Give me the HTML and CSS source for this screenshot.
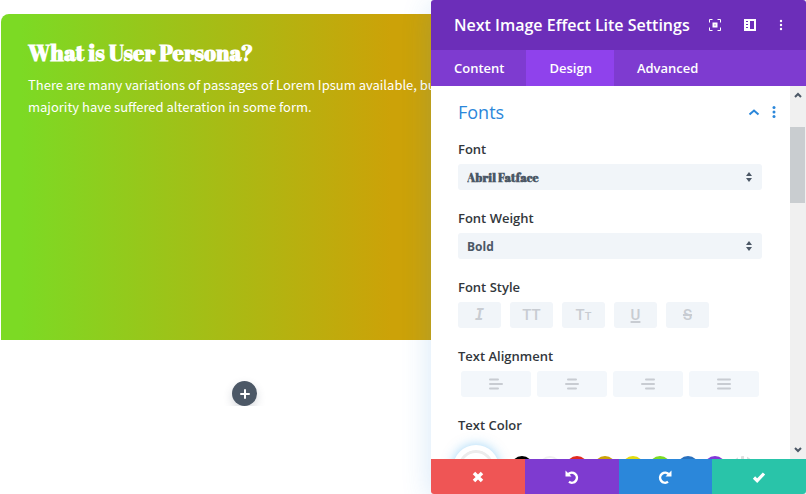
FILE: index.html
```html
<!DOCTYPE html>
<html lang="en">
<head>
  <meta charset="UTF-8" />
  <meta name="viewport" content="width=device-width, initial-scale=1.0" />
  <title>Next Image Effect Lite Settings</title>
  <link rel="stylesheet" href="styles.css">
</head>
<body>
  <main class="canvas">
    <section class="module">
      <h1>What is User Persona?</h1>
      <p>There are many variations of passages of Lorem Ipsum available, but majority have suffered alteration in some form.</p>
    </section>
    <button class="add" aria-label="Add module">
      <svg width="10" height="10" viewBox="0 0 10 10"><path d="M5 1v8M1 5h8" stroke="#fff" stroke-width="2" stroke-linecap="round" /></svg>
    </button>
  </main>

  <aside class="panel">
    <header class="panel-header">
      <h2>Next Image Effect Lite Settings</h2>
      <div class="header-tools">
        <button aria-label="Expand">
          <svg width="12" height="12" viewBox="0 0 12 12" fill="none" stroke="#fff"><path d="M.5 3.5v-3h3M8.500 .5h3v3M11.500 8.500v3h-3M3.500 11.500h-3v-3" /><rect x="4.500" y="4.500" width="3" height="3" stroke-width="2" /></svg>
        </button>
        <button aria-label="Dock panel">
          <svg width="12" height="12" viewBox="0 0 12 12"><path fill="#fff" fill-rule="evenodd" d="M0 0h12v12H0zM6 2v8h4V2zM2 2v1h2V2zM2 5v1h2V5zM2 8v1h2V8z" /></svg>
        </button>
        <button aria-label="More options">
          <svg width="4" height="12" viewBox="0 0 4 12" fill="#fff"><circle cx="2" cy="2" r="1.200" /><circle cx="2" cy="6" r="1.200" /><circle cx="2" cy="10" r="1.200" /></svg>
        </button>
      </div>
    </header>

    <nav class="tabs">
      <a href="#content">Content</a>
      <a href="#design" class="active">Design</a>
      <a href="#advanced">Advanced</a>
    </nav>

    <div class="panel-body">
      <form class="settings">
        <div class="section-title">
          <h3>Fonts</h3>
          <button type="button" aria-label="Collapse">
            <svg width="12" height="12" viewBox="0 0 12 12"><path d="M1.500 8.500L6 4.500l4.500 4" fill="none" stroke="#2b87da" stroke-width="2" /></svg>
          </button>
          <button type="button" aria-label="Section options">
            <svg width="4" height="12" viewBox="0 0 4 12" fill="#2b87da"><circle cx="2" cy="1.500" r="1.500" /><circle cx="2" cy="6" r="1.500" /><circle cx="2" cy="10.500" r="1.500" /></svg>
          </button>
        </div>

        <div class="field">
          <label for="font">Font</label>
          <div class="select">
            <select id="font" class="fatface"><option>Abril Fatface</option></select>
            <svg width="6" height="10" viewBox="0 0 6 10" fill="#4c5866"><path d="M3 0l3 4H0zM3 10l3-4H0z" /></svg>
          </div>
        </div>

        <div class="field">
          <label for="weight">Font Weight</label>
          <div class="select">
            <select id="weight"><option>Bold</option></select>
            <svg width="6" height="10" viewBox="0 0 6 10" fill="#4c5866"><path d="M3 0l3 4H0zM3 10l3-4H0z" /></svg>
          </div>
        </div>

        <div class="field" role="group" aria-labelledby="style-label">
          <span class="label" id="style-label">Font Style</span>
          <div class="styles">
            <button type="button" class="italic">I</button>
            <button type="button">TT</button>
            <button type="button">T<small>T</small></button>
            <button type="button" class="underline">U</button>
            <button type="button" class="strike">S</button>
          </div>
        </div>

        <div class="field" role="group" aria-labelledby="align-label">
          <span class="label" id="align-label">Text Alignment</span>
          <div class="aligns">
            <button type="button" aria-label="Left">
              <svg width="14" height="12" viewBox="0 0 14 12"><path d="M1 1.500h8M1 6h12M1 10.500h8" /></svg>
            </button>
            <button type="button" aria-label="Center">
              <svg width="14" height="12" viewBox="0 0 14 12"><path d="M3 1.500h8M1 6h12M3 10.500h8" /></svg>
            </button>
            <button type="button" aria-label="Right">
              <svg width="14" height="12" viewBox="0 0 14 12"><path d="M5 1.500h8M1 6h12M5 10.500h8" /></svg>
            </button>
            <button type="button" aria-label="Justify">
              <svg width="14" height="12" viewBox="0 0 14 12"><path d="M1 1.500h12M1 6h12M1 10.500h12" /></svg>
            </button>
          </div>
        </div>

        <div class="field" role="group" aria-labelledby="color-label">
          <span class="label" id="color-label">Text Color</span>
          <div class="colors">
            <button type="button" class="current" aria-label="Current color"></button>
            <div class="swatches">
              <button type="button" class="black" aria-label="Black"></button>
              <button type="button" class="white" aria-label="White"></button>
              <button type="button" class="red" aria-label="Red"></button>
              <button type="button" class="orange" aria-label="Orange"></button>
              <button type="button" class="yellow" aria-label="Yellow"></button>
              <button type="button" class="green" aria-label="Green"></button>
              <button type="button" class="blue" aria-label="Blue"></button>
              <button type="button" class="purple" aria-label="Purple"></button>
              <button type="button" class="clear" aria-label="Transparent"></button>
            </div>
          </div>
        </div>
      </form>

      <div class="scrollbar">
        <svg width="8" height="6" viewBox="0 0 8 6"><path d="M1 5l3-3 3 3" /></svg>
        <div class="track"><div class="thumb"></div></div>
        <svg width="8" height="6" viewBox="0 0 8 6"><path d="M1 1l3 3 3-3" /></svg>
      </div>
    </div>

    <footer class="actions">
      <button class="discard" aria-label="Discard">
        <svg width="12" height="12" viewBox="0 0 12 12"><path d="M2 2l8 8M10 2l-8 8" stroke="#fff" stroke-width="3.500" /></svg>
      </button>
      <button class="undo" aria-label="Undo">
        <svg width="14" height="14" viewBox="0 0 14 14"><path d="M3 4.500A5 5 0 1 1 4 11.800" fill="none" stroke="#fff" stroke-width="2.500" /><path d="M.5 .5v6h6z" fill="#fff" /></svg>
      </button>
      <button class="redo" aria-label="Redo">
        <svg width="14" height="14" viewBox="0 0 14 14"><path d="M11 4.500A5 5 0 1 0 10 11.800" fill="none" stroke="#fff" stroke-width="2.500" /><path d="M13.500 .5v6h-6z" fill="#fff" /></svg>
      </button>
      <button class="save" aria-label="Save">
        <svg width="14" height="12" viewBox="0 0 14 12"><path d="M2 6.500l3.200 3.200L12 2.500" fill="none" stroke="#fff" stroke-width="3.200" /></svg>
      </button>
    </footer>
  </aside>
</body>
</html>
```
FILE: styles.css
```css
* {
  box-sizing: border-box;
}
body {
  margin: 0;
  font-family: "Open Sans", sans-serif;
  background-color: #fff;
  overflow: hidden;
}
h1, h2, h3, p {
  margin: 0;
}
button {
  display: flex;
  align-items: center;
  justify-content: center;
  padding: 0;
  border: none;
  background: none;
  font-family: inherit;
  cursor: pointer;
}

/* page preview */
.canvas {
  display: flex;
  flex-direction: column;
  align-items: center;
  gap: 41px;
  width: 60%;
  min-width: 488px;
  padding: 14px 0 0 1px;
}
.module {
  width: 100%;
  min-height: 326px;
  padding: 26px 44px 26px 27px;
  border-radius: 8px 8px 0 0;
  background: linear-gradient(90deg, #7cda24 4%, #cca208 80%);
  color: #fff;
}
.module h1 {
  font-family: "Abril Fatface", "Liberation Serif", serif;
  font-size: 22px;
  line-height: 26px;
}
.module p {
  margin-top: 8px;
  font-family: "Source Sans Pro", "Noto Sans CJK JP", sans-serif;
  font-size: 13px;
  line-height: 22px;
}
.add {
  width: 25px;
  height: 25px;
  border-radius: 50%;
  background-color: #4c5866;
  box-shadow: 0 4px 10px rgba(60, 70, 90, 0.2);
}

/* settings panel */
.panel {
  position: absolute;
  top: 0;
  right: 0;
  display: flex;
  flex-direction: column;
  width: 375px;
  height: 100vh;
  border-radius: 3px;
  overflow: hidden;
  background-color: #fff;
  box-shadow: 0 5px 30px rgba(43, 135, 218, 0.2);
}
.panel-header {
  display: flex;
  align-items: center;
  justify-content: space-between;
  height: 50px;
  padding: 0 23px;
  background-color: #6c2eb9;
}
.panel-header h2 {
  color: #fff;
  font-size: 16px;
  font-weight: 600;
  white-space: nowrap;
}
.header-tools {
  display: flex;
  gap: 23px;
}
.tabs {
  display: flex;
  height: 36px;
  background-color: #7e3bd0;
}
.tabs a {
  padding: 0 22px 0 23px;
  color: #fff;
  font-size: 13px;
  font-weight: 600;
  line-height: 36px;
  text-decoration: none;
}
.tabs .active {
  background-color: #8f42ec;
}
.panel-body {
  display: flex;
  flex: 1;
  min-height: 0;
}
.settings {
  flex: 1;
  padding: 14px 28px 0 27px;
  overflow: hidden;
}
.section-title {
  display: flex;
  align-items: center;
  gap: 12px;
  height: 24px;
  margin: 0 -14px 15px 0;
}
.section-title h3 {
  flex: 1;
  color: #2b87da;
  font-size: 18px;
  font-weight: 400;
}

.field {
  margin-bottom: 18px;
}
.field label,
.label {
  display: block;
  margin-bottom: 5px;
  color: #32373c;
  font-size: 13px;
  font-weight: 600;
  line-height: 20px;
}
.select {
  display: flex;
  align-items: center;
  height: 26px;
  padding-right: 10px;
  border-radius: 3px;
  background-color: #f1f5f9;
}
.select select {
  flex: 1;
  height: 26px;
  padding: 0 9px;
  border: none;
  background: none;
  color: #4c5866;
  font-family: inherit;
  font-size: 12px;
  font-weight: 700;
  appearance: none;
}
.select .fatface {
  font-family: "Abril Fatface", "Liberation Serif", serif;
}

.styles {
  display: flex;
  gap: 9px;
}
.styles button {
  align-items: baseline;
  width: 43px;
  height: 26px;
  border-radius: 3px;
  background-color: #f1f5f9;
  color: #c8ccd2;
  font-family: Roboto, sans-serif;
  font-size: 15px;
  font-weight: 500;
  line-height: 26px;
}
.styles small {
  font-size: 11px;
}
.styles .italic {
  font-family: "DejaVu Sans Mono", monospace;
  font-style: italic;
  font-weight: 700;
}
.styles .underline {
  text-decoration: underline 2px;
}
.styles .strike {
  text-decoration: line-through 2px;
}
.aligns {
  display: flex;
  gap: 6px;
  padding: 0 3px;
}
.aligns button {
  flex: 1;
  height: 26px;
  border-radius: 3px;
  background-color: #f3f7fb;
}
.aligns path {
  stroke: #c8ccd2;
  stroke-width: 2;
  stroke-linecap: round;
}

.colors {
  display: flex;
  align-items: flex-start;
  gap: 12px;
  margin: 10px 8px 0 -5px;
}
.current {
  width: 46px;
  height: 46px;
  border: 5px solid #fff;
  border-radius: 50%;
  background-color: #fff;
  box-shadow: 0 0 12px rgba(60, 170, 240, 0.5), inset 0 0 0 3px #ececec;
}
.swatches {
  display: flex;
  flex: 1;
  justify-content: space-between;
  padding-top: 11px;
}
.swatches button {
  width: 22px;
  height: 22px;
  border-radius: 50%;
}
.black { background-color: #000; }
.white { box-shadow: inset 0 0 0 2px #f0f0f0; }
.red { background-color: #e02b20; }
.orange { background-color: #cca208; }
.yellow { background-color: #e3dc12; }
.green { background-color: #7cda24; }
.blue { background-color: #2a70bd; }
.purple { background-color: #8338d8; }
.clear { background: repeating-conic-gradient(#ddd 0 25%, #fff 0 50%) 0 0 / 6px 6px; }

.scrollbar {
  display: flex;
  flex-direction: column;
  align-items: center;
  gap: 6px;
  width: 16px;
  padding: 6px 0;
  background-color: #f0f0f0;
}
.scrollbar path {
  fill: none;
  stroke: #4c5866;
  stroke-width: 2;
}
.track {
  flex: 1;
  width: 100%;
  padding-top: 23px;
}
.thumb {
  width: 15px;
  height: 76px;
  background-color: #c9cdd0;
}

.actions {
  display: flex;
  height: 35px;
}
.actions button {
  flex: 1;
}
.discard { background-color: #ef5555; }
.undo { background-color: #7e3bd0; }
.redo { background-color: #2b87da; }
.save { background-color: #29c4a9; }
```
